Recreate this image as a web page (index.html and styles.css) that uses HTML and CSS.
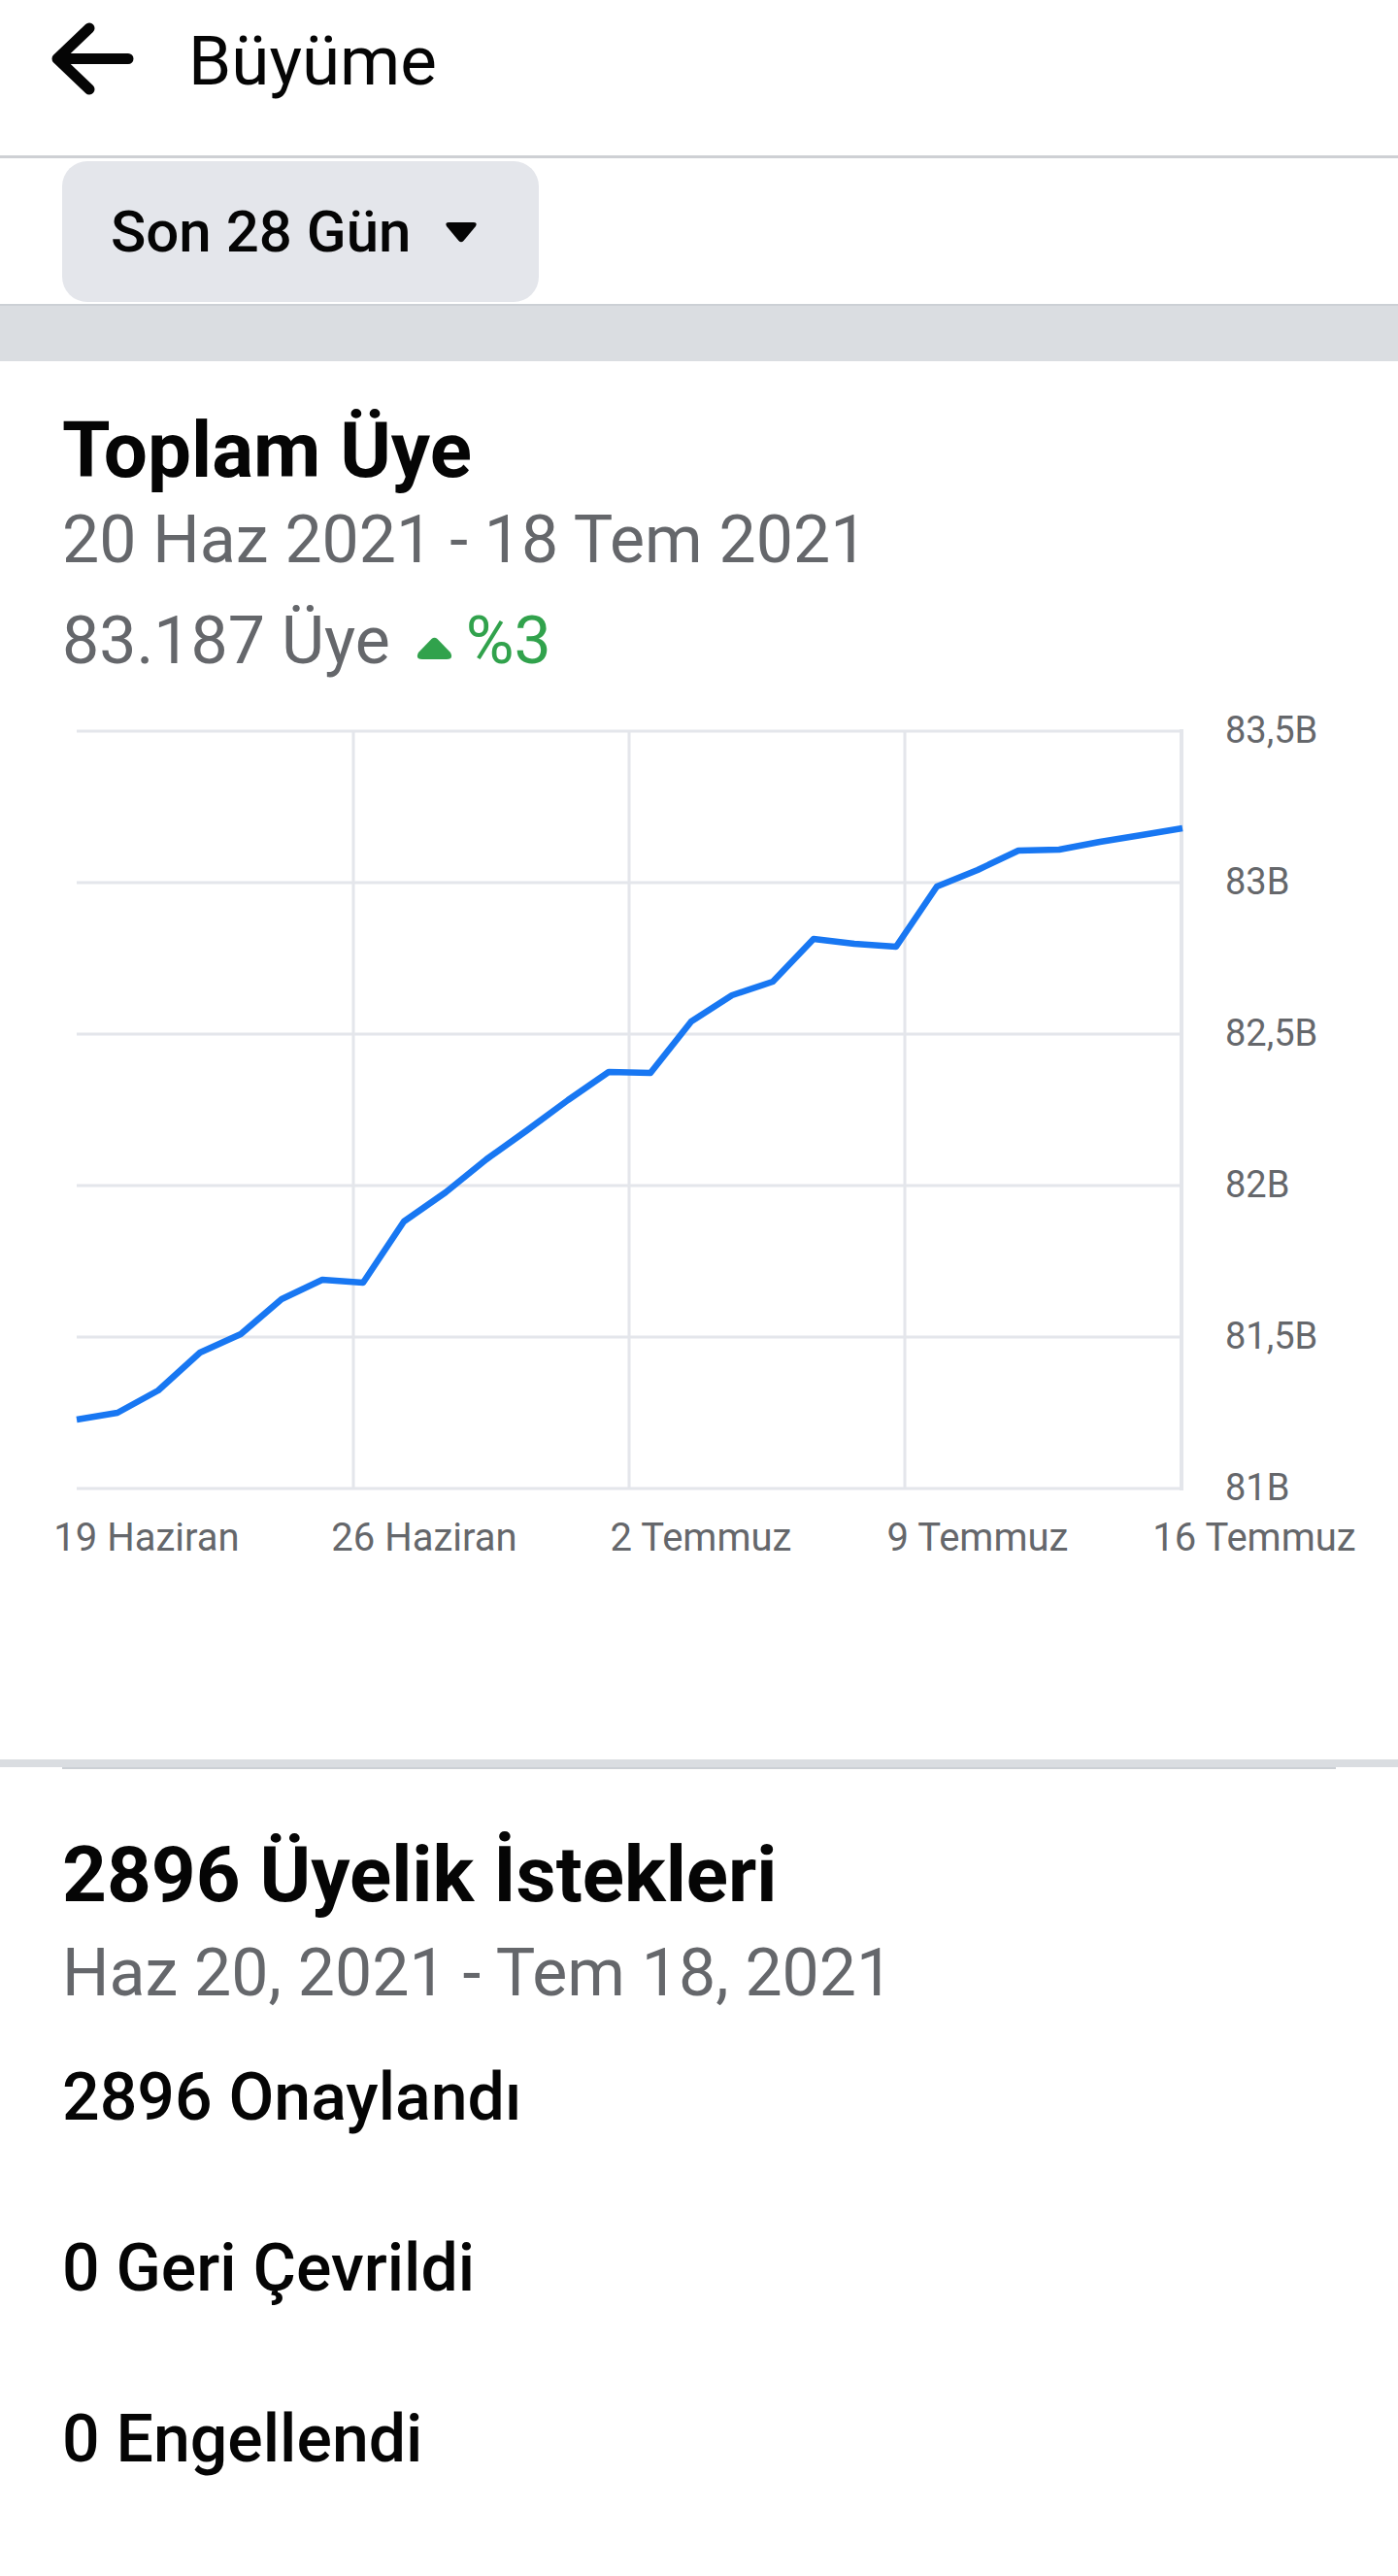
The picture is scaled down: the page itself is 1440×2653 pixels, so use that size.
FILE: index.html
```html
<!DOCTYPE html>
<html lang="tr">
<head>
    <meta charset="UTF-8">
    <meta name="viewport" content="width=device-width, initial-scale=1.0">
    <title>Büyüme</title>
    <link rel="stylesheet" href="styles.css">
</head>
<body>
    <header class="topbar">
        <svg class="back-icon" viewBox="0 0 85 75">
            <path d="M39 6 L6 37.5 L39 69 M6 37.5 H79" fill="none" stroke="#050505" stroke-width="11" stroke-linecap="round" stroke-linejoin="round"/>
        </svg>
        <h1 class="page-title">Büyüme</h1>
    </header>

    <div class="filter-bar">
        <button class="range-select" type="button">
            Son 28 Gün
            <svg class="caret" viewBox="0 0 34 22">
                <path d="M4 1 H30 Q34 1 32 5 L19.5 20 Q17 22.5 14.5 20 L2 5 Q0 1 4 1 Z" fill="#050505"/>
            </svg>
        </button>
    </div>

    <div class="section-gap"></div>

    <section class="card">
        <div class="card-head">
            <h2 class="card-title">Toplam Üye</h2>
            <p class="card-date">20 Haz 2021 - 18 Tem 2021</p>
            <p class="stat">83.187 Üye <svg class="trend-icon" viewBox="0 0 37 23"><path d="M15.5 2 Q18.5 -0.5 21.5 2 L35 16 Q38.5 23 31 23 H6 Q-1.5 23 2 16 Z" fill="#31a24c"/></svg><span class="trend">%3</span></p>
        </div>

        <!-- members over the last 28 days -->
        <svg class="chart" width="1440" height="910" viewBox="0 0 1440 910">
            <g class="grid">
                <line x1="79" y1="49" x2="1218" y2="49"/>
                <line x1="79" y1="205" x2="1218" y2="205"/>
                <line x1="79" y1="361" x2="1218" y2="361"/>
                <line x1="79" y1="517" x2="1218" y2="517"/>
                <line x1="79" y1="673" x2="1218" y2="673"/>
                <line x1="79" y1="829" x2="1218" y2="829"/>
                <line x1="364" y1="49" x2="364" y2="829"/>
                <line x1="648" y1="49" x2="648" y2="829"/>
                <line x1="932" y1="49" x2="932" y2="829"/>
                <line class="axis" x1="1217" y1="47" x2="1217" y2="831"/>
            </g>
            <g class="y-labels">
                <text x="1262" y="61">83,5B</text>
                <text x="1262" y="217">83B</text>
                <text x="1262" y="373">82,5B</text>
                <text x="1262" y="529">82B</text>
                <text x="1262" y="685">81,5B</text>
                <text x="1262" y="841">81B</text>
            </g>
            <g class="x-labels">
                <text x="151" y="893">19 Haziran</text>
                <text x="437" y="893">26 Haziran</text>
                <text x="722" y="893">2 Temmuz</text>
                <text x="1007" y="893">9 Temmuz</text>
                <text x="1292" y="893">16 Temmuz</text>
            </g>
            <polyline class="series" points="79,758 121,751 163,728 206,689 248,670 290,634 332,614 374,617 416,554 459,524 501,490 543,460 585,429 627,400 670,401 712,348 754,321 796,307 838,263 880,268 923,271 965,209 1007,192 1049,172 1091,171 1133,163 1176,156 1218,149"/>
        </svg>
    </section>

    <div class="divider"></div>

    <section class="requests">
        <h2 class="card-title">2896 Üyelik İstekleri</h2>
        <p class="card-date requests-date">Haz 20, 2021 - Tem 18, 2021</p>
        <ul class="req-list">
            <li class="req-item">2896 Onaylandı</li>
            <li class="req-item">0 Geri Çevrildi</li>
            <li class="req-item">0 Engellendi</li>
        </ul>
    </section>
</body>
</html>
```

FILE: styles.css
```css
body {
    font-family: Roboto, "Liberation Sans", Arial, sans-serif;
    background-color: #fff;
    color: #050505;
    margin: 0;
    padding: 0;
}

.topbar {
    display: flex;
    align-items: flex-start;
    height: 163px;
    box-sizing: border-box;
    padding: 20px 0 0 53px;
    border-bottom: 3px solid #ced0d4;
}

.back-icon {
    width: 85px;
    height: 75px;
    margin-top: 3px;
    flex-shrink: 0;
}

.page-title {
    margin: 0 0 0 56px;
    font-size: 71px;
    font-weight: 400;
    line-height: 86px;
}

.filter-bar {
    padding: 3px 64px 2px;
}

.range-select {
    display: flex;
    align-items: center;
    width: 491px;
    height: 145px;
    box-sizing: border-box;
    padding: 0 0 0 50px;
    border: none;
    border-radius: 26px;
    background-color: #e4e6eb;
    color: #050505;
    font-family: inherit;
    font-size: 60px;
    font-weight: 500;
    cursor: pointer;
}

.caret {
    width: 34px;
    height: 22px;
    margin-left: 35px;
}

.section-gap {
    height: 57px;
    border-top: 2px solid #ccd0d5;
    background-color: #dadde1;
}

.card-head {
    padding: 44px 64px 0;
}

.card-title {
    margin: 0;
    font-size: 80px;
    font-weight: 700;
    line-height: 96px;
    color: #050505;
}

.card-date {
    margin: 0;
    font-size: 68px;
    line-height: 88px;
    color: #65676b;
}

.stat {
    margin: 16px 0 0;
    font-size: 68px;
    line-height: 88px;
    color: #65676b;
}

.trend-icon {
    width: 37px;
    height: 23px;
    margin: 0 14px 0 10px;
    vertical-align: 4px;
}

.trend {
    color: #31a24c;
}

.chart {
    display: block;
    margin-bottom: 198px;
}

.grid line {
    stroke: #e4e6eb;
    stroke-width: 3;
}

.grid .axis {
    stroke-width: 4;
}

.chart text {
    font-family: Roboto, "Liberation Sans", Arial, sans-serif;
    fill: #65676b;
}

.y-labels text {
    font-size: 38px;
}

.x-labels text {
    font-size: 40px;
    text-anchor: middle;
}

.series {
    fill: none;
    stroke: #1877f2;
    stroke-width: 6.5;
    stroke-linejoin: round;
}

.divider {
    height: 8px;
    background-color: #dadde1;
}

.requests {
    margin: 0 64px;
    padding-top: 61px;
    border-top: 2px solid #ccd0d5;
}

.requests-date {
    margin-top: 9px;
}

.req-list {
    list-style: none;
    margin: 0;
    padding: 0;
}

.req-item {
    padding: 40px 0 48px;
    font-size: 68px;
    font-weight: 500;
    line-height: 88px;
}
```
